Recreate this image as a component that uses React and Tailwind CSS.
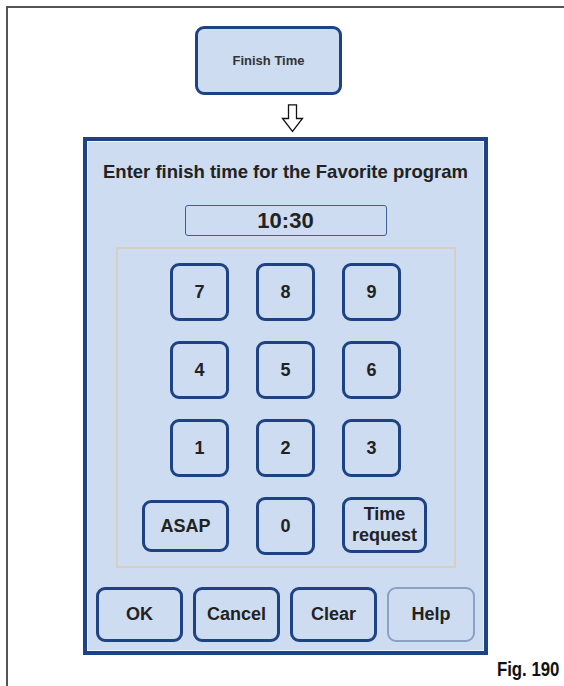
const KEY_BASE =
  "flex items-center justify-center border-[3px] border-[#1d4384] rounded-[9px] bg-[#cddcf1] text-[18px] font-bold text-[#222]";

const digitRows = [
  ["7", "8", "9"],
  ["4", "5", "6"],
  ["1", "2", "3"],
];

const DownArrow = () => (
  <svg width="23" height="29" viewBox="0 0 23 29" className="ml-[273px] mt-[9px] block">
    <path
      d="M7.5 0.8 H15.5 V14.5 H21.5 L11.5 27.5 L1.5 14.5 H7.5 Z"
      fill="white"
      stroke="#111"
      strokeWidth="1.3"
      strokeLinejoin="miter"
    />
  </svg>
);

const App = () => {
  return (
    <div
      className="w-[564px] h-[686px] bg-white pt-[6px] pl-[6px] overflow-hidden"
      style={{ fontFamily: '"Liberation Sans", Arial, sans-serif' }}
    >
      <div className="h-full border-t-2 border-l-2 border-[#555] flex flex-col items-start">
        {/* top button */}
        <div className="ml-[187px] mt-[18px] w-[147px] h-[69px] flex items-center justify-center border-[3px] border-[#1d4384] rounded-[9px] bg-[#cddcf1] text-[13px] font-bold text-[#333]">
          Finish Time
        </div>

        <DownArrow />

        {/* dialog */}
        <div className="ml-[75px] mt-[4px] w-[405px] h-[518px] border-4 border-[#1d4384] bg-[#cddcf1] shadow-[inset_0_0_0_1px_#eef3fb] flex flex-col items-center">
          <div className="pt-[22px] text-[18.5px] leading-[18px] font-bold text-[#222] whitespace-nowrap">
            Enter finish time for the Favorite program
          </div>

          <div className="mt-[24px] w-[202px] h-[31px] flex items-center justify-center border-[1.5px] border-[#3b5f99] rounded-[3px] text-[22px] font-bold text-[#222]">
            10:30
          </div>

          <div className="mt-[11px] w-[340px] h-[321px] border-2 border-[#d6d0c3] pt-[14px] flex justify-center">
            <div className="grid grid-cols-[59px_59px_59px] auto-rows-[58px] gap-x-[27px] gap-y-[20px]">
              {digitRows.map((row) =>
                row.map((d) => (
                  <div key={d} className={`${KEY_BASE} w-[59px] h-[58px]`}>
                    {d}
                  </div>
                ))
              )}
              <div className={`${KEY_BASE} justify-self-end self-center w-[87px] h-[52px]`}>
                ASAP
              </div>
              <div className={`${KEY_BASE} w-[59px] h-[58px]`}>0</div>
              <div
                className={`${KEY_BASE} justify-self-start self-start w-[85px] h-[56px] flex-col leading-[21px]`}
              >
                <span>Time</span>
                <span>request</span>
              </div>
            </div>
          </div>

          <div className="mt-[19px] flex gap-[10px]">
            {["OK", "Cancel", "Clear"].map((label) => (
              <div key={label} className={`${KEY_BASE} w-[87px] h-[55px]`}>
                {label}
              </div>
            ))}
            <div className="w-[88px] h-[55px] flex items-center justify-center border-2 border-[#8aa0c4] rounded-[9px] text-[18px] font-bold text-[#222]">
              Help
            </div>
          </div>
        </div>

        <div
          className="self-end pr-[6px] mt-[4px] text-[20px] leading-[20px] font-bold text-[#111] scale-x-[0.84] origin-right"
          style={{ fontFamily: '"Liberation Sans Narrow", "Arial Narrow", "Liberation Sans", sans-serif' }}
        >
          Fig. 190
        </div>
      </div>
    </div>
  );
};

export default App;
